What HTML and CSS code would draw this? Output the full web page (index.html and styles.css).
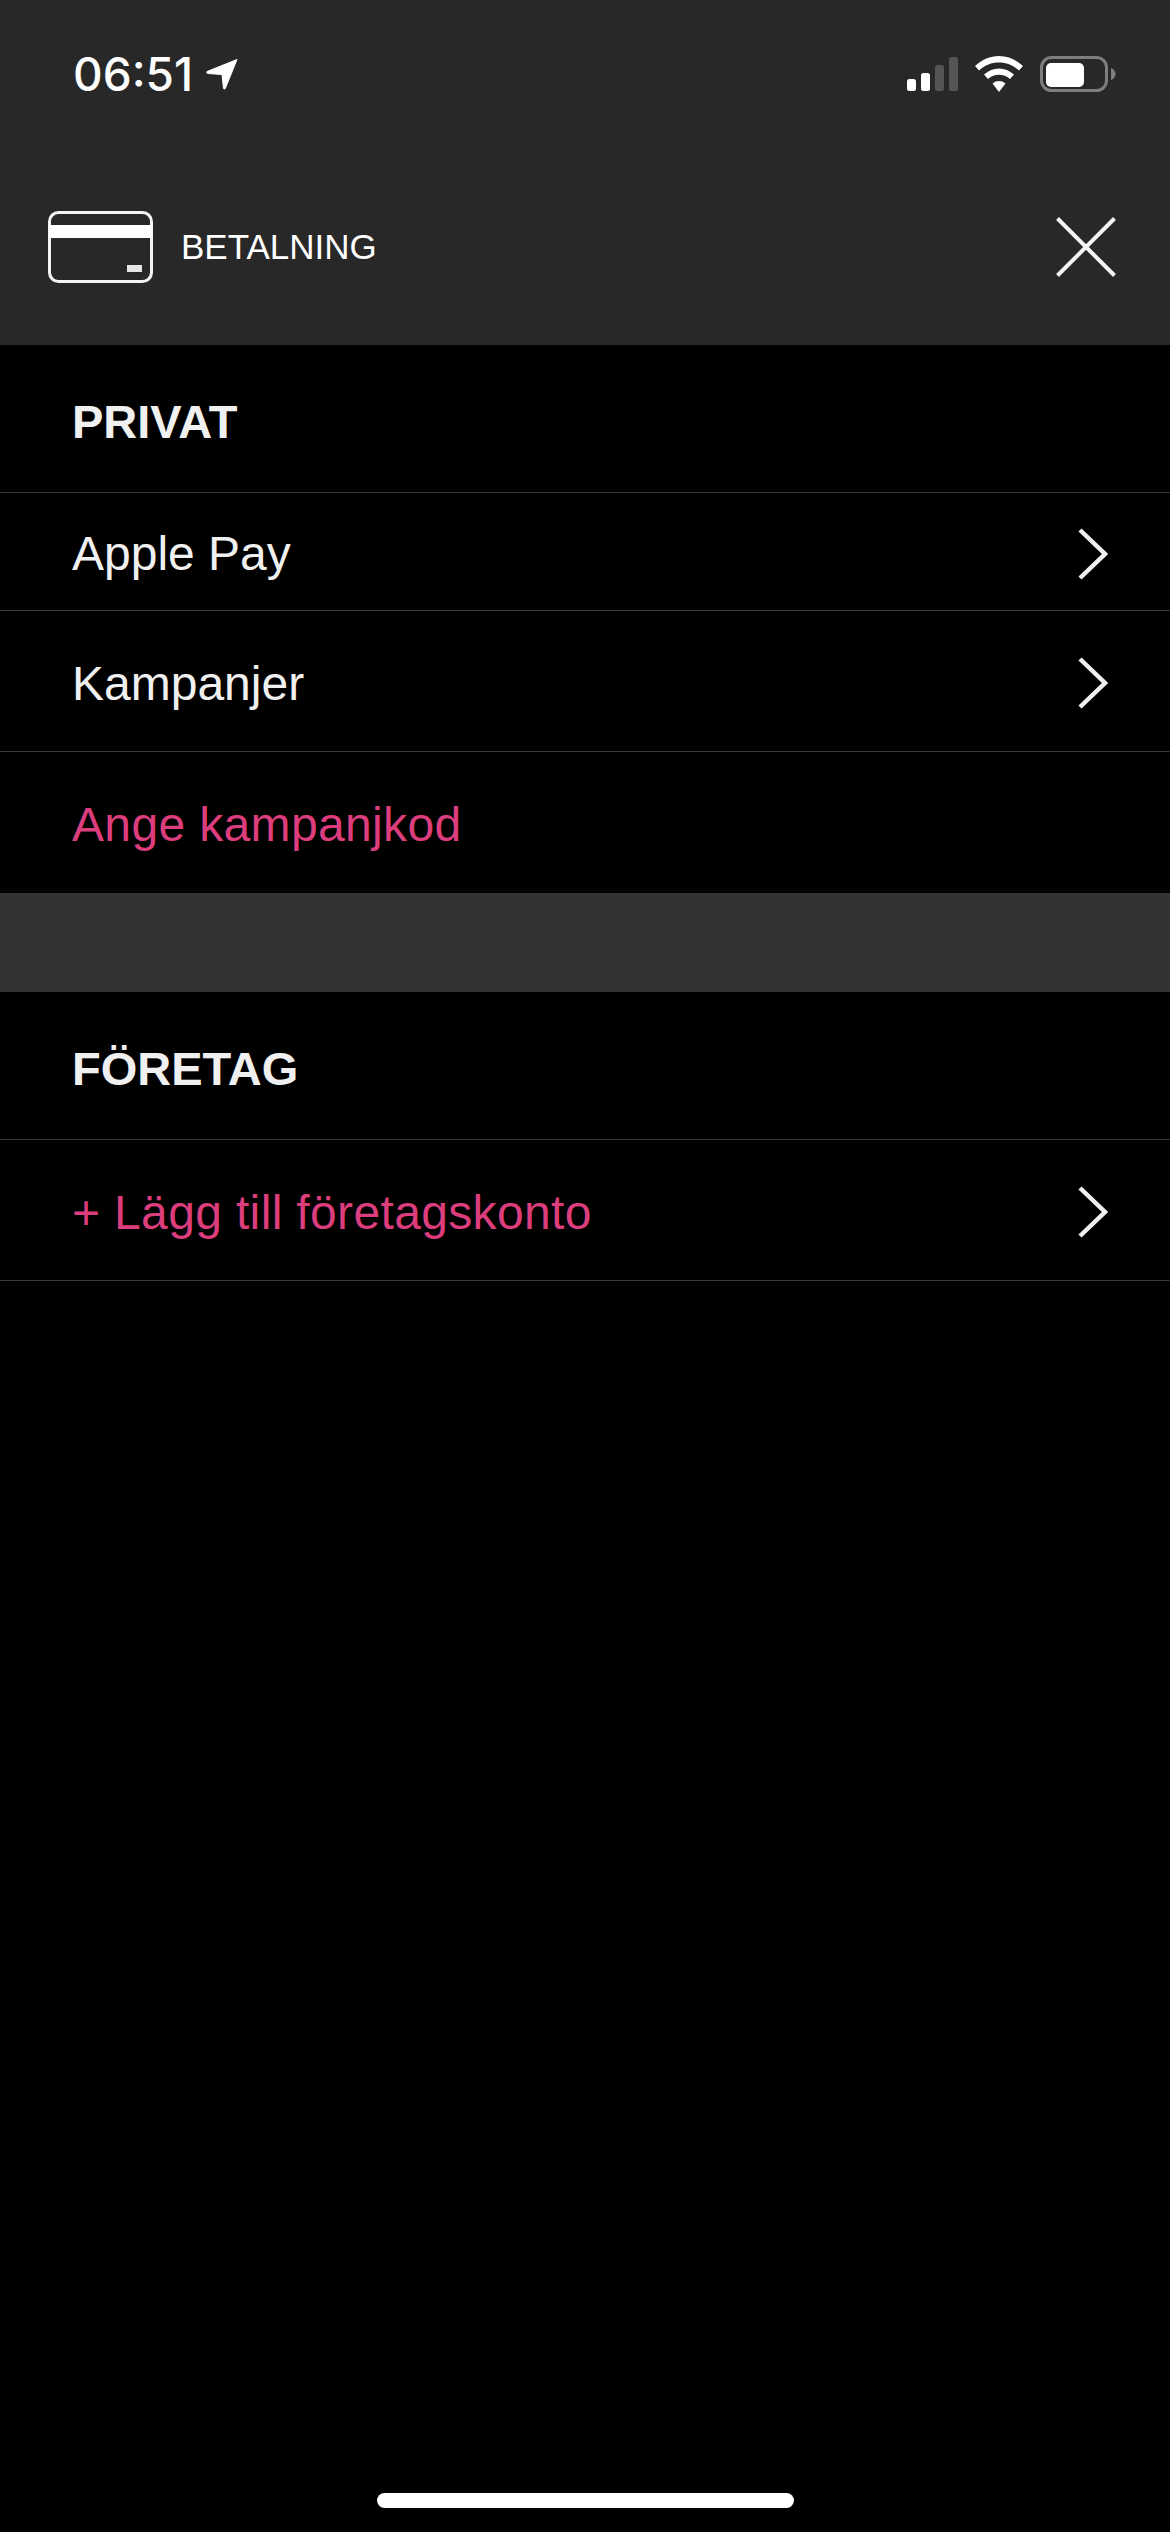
FILE: index.html
```html
<!DOCTYPE html>
<html lang="sv">
<head>
    <meta charset="UTF-8">
    <meta name="viewport" content="width=device-width, initial-scale=1.0">
    <title>Betalning</title>
    <link rel="stylesheet" href="styles.css">
</head>
<body>
    <header class="top">
        <div class="status-bar">
            <div class="clock">
                <span class="time">06:51</span>
                <svg class="location" width="32" height="32" viewBox="0 0 32 32"><path d="M31 1.500L1 13.500Q0 15 2 15.500L16 16.500L17.500 30.500Q18.500 32 19.500 30Z" fill="#fff" stroke="#fff" stroke-width="1" stroke-linejoin="round"/></svg>
            </div>
            <div class="status-icons">
                <svg class="signal" width="51" height="34" viewBox="0 0 51 34">
                    <rect x="0" y="22" width="9" height="12" rx="2.5" fill="#fff"/>
                    <rect x="14" y="16" width="9" height="18" rx="2.5" fill="#fff"/>
                    <rect x="28" y="8" width="9" height="26" rx="2.5" fill="#555"/>
                    <rect x="42" y="0" width="9" height="34" rx="2.5" fill="#555"/>
                </svg>
                <svg class="wifi" width="48" height="36" viewBox="0 0 48 36">
                    <path d="M24 0C15 0 7 3.500 0 10L4 14.500C10 9 16.500 6.500 24 6.500S38 9 44 14.500L48 10C41 3.500 33 0 24 0Z" fill="#fff"/>
                    <path d="M24 12.500C18.500 12.500 13.500 14.500 9 18.500L13 23C16.500 20 20 18.800 24 18.800S31.500 20 35 23L39 18.500C34.500 14.500 29.500 12.500 24 12.500Z" fill="#fff"/>
                    <path d="M24 25C21.500 25 19.500 25.800 17.500 27.500L24 36L30.500 27.500C28.500 25.800 26.500 25 24 25Z" fill="#fff"/>
                </svg>
                <svg class="battery" width="76" height="36" viewBox="0 0 76 36">
                    <rect x="1.500" y="1.500" width="65" height="33" rx="10" fill="none" stroke="#7e7e7e" stroke-width="3"/>
                    <rect x="6" y="7" width="38" height="24" rx="5" fill="#fff"/>
                    <path d="M71 12C74 13 75.500 15.500 75.500 18S74 23 71 24Z" fill="#7e7e7e"/>
                </svg>
            </div>
        </div>
        <div class="title-bar">
            <div class="title">
                <svg class="card" width="105" height="72" viewBox="0 0 105 72">
                    <rect x="1.500" y="1.500" width="102" height="69" rx="9" fill="none" stroke="#f4f4f4" stroke-width="3"/>
                    <rect x="1" y="14" width="103" height="13" fill="#fff"/>
                    <rect x="79" y="54" width="15" height="7" fill="#e6e6e6"/>
                </svg>
                <span class="title-text">BETALNING</span>
            </div>
            <svg class="close" width="60" height="60" viewBox="0 0 60 60"><path d="M1.500 1.500L58.500 58.500M58.500 1.500L1.500 58.500" fill="none" stroke="#f4f4f4" stroke-width="4"/></svg>
        </div>
    </header>

    <section class="group">
        <h2 class="group-title group-title-first">PRIVAT</h2>
        <div class="row row-short">
            <span>Apple Pay</span>
            <svg class="chevron" width="30" height="52" viewBox="0 0 30 52"><path d="M2 2L27 26L2 50" fill="none" stroke="#f0f0f0" stroke-width="4.500"/></svg>
        </div>
        <div class="row">
            <span>Kampanjer</span>
            <svg class="chevron" width="30" height="52" viewBox="0 0 30 52"><path d="M2 2L27 26L2 50" fill="none" stroke="#f0f0f0" stroke-width="4.500"/></svg>
        </div>
        <div class="row row-pink row-last">
            <span>Ange kampanjkod</span>
        </div>
    </section>

    <div class="band"></div>

    <section class="group">
        <h2 class="group-title">FÖRETAG</h2>
        <div class="row row-pink">
            <span>+ Lägg till företagskonto</span>
            <svg class="chevron" width="30" height="52" viewBox="0 0 30 52"><path d="M2 2L27 26L2 50" fill="none" stroke="#f0f0f0" stroke-width="4.500"/></svg>
        </div>
    </section>

    <div class="home-bar"></div>
</body>
</html>
```

FILE: styles.css
```css
:root {
    --header-color: #282828;
    --band-color: #333335;
    --line-color: #3a3a3a;
    --text-color: #f0f0f0;
    --pink-color: #dc3d7c;
}

* {
    margin: 0;
    padding: 0;
    box-sizing: border-box;
}

body {
    font-family: "Liberation Sans", Arial, sans-serif;
    background-color: #000;
    color: var(--text-color);
    display: flex;
    flex-direction: column;
    min-height: 100vh;
}

.top {
    background-color: var(--header-color);
    height: 345px;
}

.status-bar {
    height: 148px;
    display: flex;
    justify-content: space-between;
    align-items: center;
    padding: 0 54px 0 73px;
}

.clock {
    display: flex;
    align-items: center;
    gap: 13px;
}

.time {
    font-family: Inter, "Liberation Sans", sans-serif;
    font-size: 46px;
    font-weight: 500;
    color: #fff;
}

.status-icons {
    display: flex;
    align-items: center;
    gap: 17px;
}

.title-bar {
    height: 197px;
    display: flex;
    justify-content: space-between;
    align-items: center;
    padding: 0 54px 0 48px;
}

.title {
    display: flex;
    align-items: center;
    gap: 28px;
}

.title-text {
    font-size: 35px;
    color: #fff;
}

.group-title {
    height: 148px;
    display: flex;
    align-items: center;
    padding: 6px 0 0 72px;
    font-size: 47px;
    font-weight: 700;
    border-bottom: 1px solid var(--line-color);
}

.row {
    height: 141px;
    display: flex;
    justify-content: space-between;
    align-items: center;
    padding: 4px 62px 0 72px;
    font-size: 48px;
    border-bottom: 1px solid var(--line-color);
}

.row-short {
    height: 118px;
}

.row-last {
    border-bottom: none;
}

.row-pink {
    color: var(--pink-color);
    letter-spacing: 0.35px;
}

.band {
    height: 99px;
    background-color: var(--band-color);
}

.home-bar {
    width: 417px;
    height: 15px;
    margin: auto auto 24px;
    border-radius: 8px;
    background-color: #fff;
}
```
